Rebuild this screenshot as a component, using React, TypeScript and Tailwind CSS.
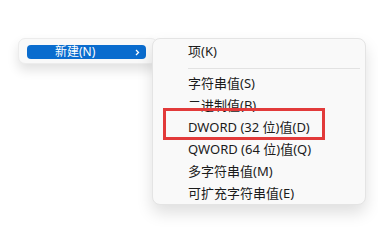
import React from "react";

const items = [
  "字符串值(S)",
  "二进制值(B)",
  "DWORD (32 位)值(D)",
  "QWORD (64 位)值(Q)",
  "多字符串值(M)",
  "可扩充字符串值(E)",
];

export default function App() {
  return (
    <div
      className="w-[378px] h-[239px] bg-white overflow-hidden text-[#1b1b1b]"
      style={{ fontFamily: '"Noto Sans", "Noto Sans CJK SC", sans-serif' }}
    >
      <div className="flex items-start pt-[38px] pl-[18px]">
        {/* parent menu */}
        <div className="w-[140px] h-[26px] -mr-[6px] rounded-[7px] bg-[#f9f9f9] border border-[#ececec] shadow-[0_6px_12px_rgba(0,0,0,0.12)] pt-[6px] pl-[8px]">
          <div className="w-[119px] h-[14px] rounded-[4px] bg-[#0a6cce] flex items-center text-white text-[12px] leading-none">
            <span className="ml-[28px]">新建(N)</span>
            <svg className="ml-auto mr-[6px]" width="5" height="7" viewBox="0 0 5 7">
              <path d="M1 1l2.5 2.5L1 6" fill="none" stroke="white" strokeWidth="1.3" />
            </svg>
          </div>
        </div>

        {/* submenu */}
        <div className="relative z-10 w-[214px] h-[167px] rounded-[8px] bg-[#f9f9f9] border border-[#e4e4e4] shadow-[0_8px_16px_rgba(0,0,0,0.13)] pt-[2px] text-[13px]">
          <div className="h-[22px] flex items-center pl-[35px]">项(K)</div>
          <div className="h-[10px] flex items-center pl-[35px] pr-[5px]">
            <div className="h-px w-full bg-[#e2e2e2]" />
          </div>
          {items.map((t) => (
            <div key={t} className="h-[22px] flex items-center pl-[35px] whitespace-nowrap">
              {t}
            </div>
          ))}
          <div className="absolute left-[10px] top-[69px] w-[162px] h-[32px] border-[3px] border-[#e23a3a]" />
        </div>
      </div>
    </div>
  );
}
